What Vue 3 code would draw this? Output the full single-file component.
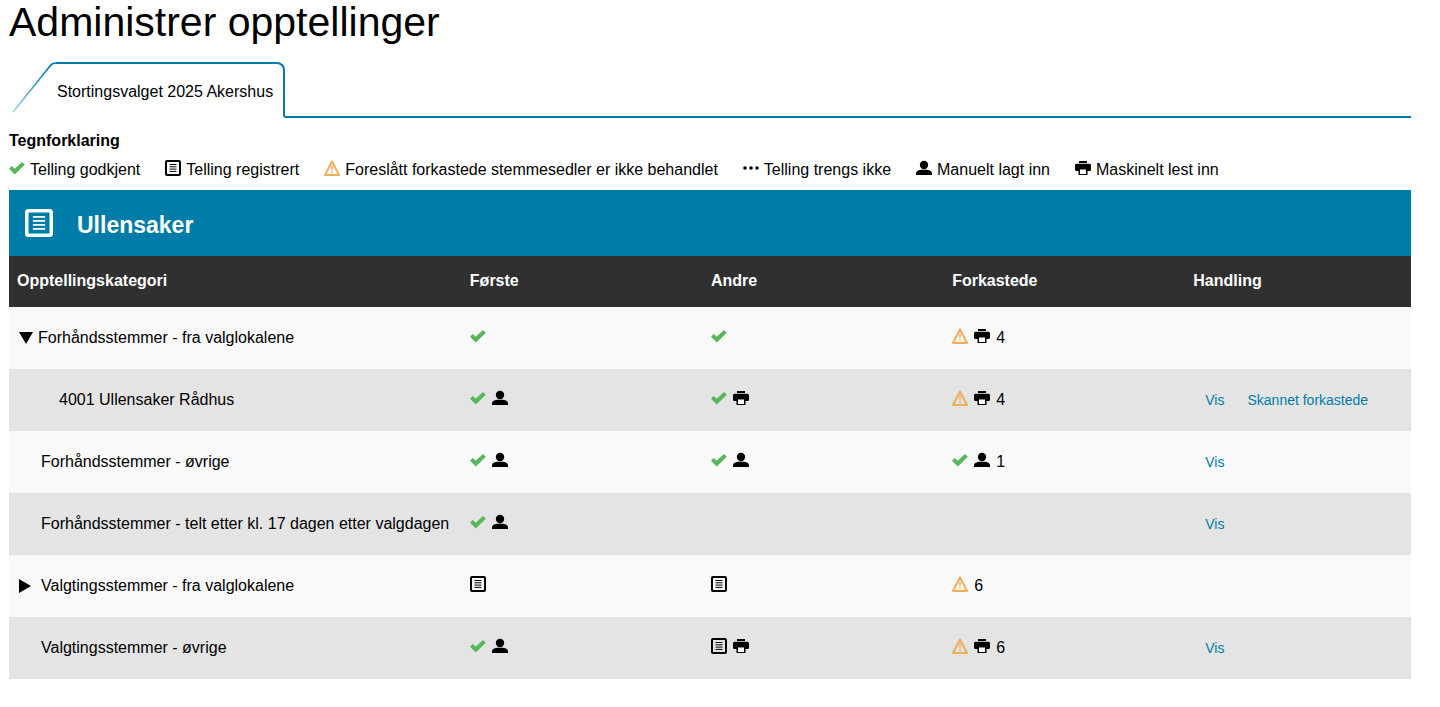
<script setup>
import { h, ref, computed } from 'vue'

const shapes = {
  check: () => [h('path', { d: 'M0 8.700 2.800 5.900 5.700 8.800 13 2 15.800 4.800 5.800 14.400Z', fill: '#57b65a' })],
  list: () => [
    h('rect', { x: 1, y: 1, width: 14, height: 14, rx: 1, fill: 'none', stroke: 'currentColor', 'stroke-width': 2 }),
    h('path', { d: 'M4.500 4.500h7M4.500 6.800h7M4.500 9.100h7M4.500 11.400h7', stroke: 'currentColor', fill: 'none' })
  ],
  warn: () => [
    h('path', { d: 'M8 1.500 15 15H1Z', fill: 'none', stroke: '#f0ad5a', 'stroke-width': 2, 'stroke-linejoin': 'round' }),
    h('path', { d: 'M8 5.800v4.400M8 11.300v1.500', stroke: '#f0ad5a', 'stroke-width': 1.5, fill: 'none' })
  ],
  dots: () => [2, 8, 14].map((cx) => h('circle', { cx, cy: 8, r: 1.8, fill: 'currentColor' })),
  person: () => [
    h('circle', { cx: 8, cy: 5, r: 4.2, fill: 'currentColor' }),
    h('path', { d: 'M0 15v-1.500Q0 10.200 5 9.800H11Q16 10.200 16 13.500V15Z', fill: 'currentColor' })
  ],
  printer: () => [
    h('path', { d: 'M4 1h8v2H4ZM1.500 3.800h13Q16 3.800 16 5.300v4.200Q16 11 14.500 11H12.500v4H3.500v-4H1.500Q0 11 0 9.500V5.300Q0 3.800 1.500 3.800Z', fill: 'currentColor' }),
    h('path', { d: 'M5 9.500h6v4.500H5Z', fill: '#fff' })
  ]
}
const Icon = (props) =>
  h('svg', { viewBox: '0 0 16 16', width: props.size || 16, height: props.size || 16, 'aria-hidden': 'true' }, shapes[props.name]())
Icon.props = ['name', 'size']

const legend = [
  { icon: 'check', text: 'Telling godkjent' },
  { icon: 'list', text: 'Telling registrert' },
  { icon: 'warn', text: 'Foreslått forkastede stemmesedler er ikke behandlet' },
  { icon: 'dots', text: 'Telling trengs ikke' },
  { icon: 'person', text: 'Manuelt lagt inn' },
  { icon: 'printer', text: 'Maskinelt lest inn' }
]

const cell = (icons = [], count = '') => ({ icons, count })
const open = ref(true)
const allRows = [
  { name: 'Forhåndsstemmer - fra valglokalene', toggle: true, cells: [cell(['check']), cell(['check']), cell(['warn', 'printer'], '4')], links: [] },
  { name: '4001 Ullensaker Rådhus', child: true, cells: [cell(['check', 'person']), cell(['check', 'printer']), cell(['warn', 'printer'], '4')], links: ['Vis', 'Skannet forkastede'] },
  { name: 'Forhåndsstemmer - øvrige', cells: [cell(['check', 'person']), cell(['check', 'person']), cell(['check', 'person'], '1')], links: ['Vis'] },
  { name: 'Forhåndsstemmer - telt etter kl. 17 dagen etter valgdagen', cells: [cell(['check', 'person']), cell(), cell()], links: ['Vis'] },
  { name: 'Valgtingsstemmer - fra valglokalene', closed: true, cells: [cell(['list']), cell(['list']), cell(['warn'], '6')], links: [] },
  { name: 'Valgtingsstemmer - øvrige', cells: [cell(['check', 'person']), cell(['list', 'printer']), cell(['warn', 'printer'], '6')], links: ['Vis'] }
]
const rows = computed(() => allRows.filter((r) => !r.child || open.value))
</script>

<template>
  <main class="page">
    <h1>Administrer opptellinger</h1>

    <div class="tabs" role="tablist">
      <svg class="slant" width="44" height="56" viewBox="0 0 44 56" aria-hidden="true">
        <defs>
          <linearGradient id="edge" x1="0" y1="1" x2="1" y2="0">
            <stop offset="0" stop-color="#a8d5e4" />
            <stop offset="0.9" stop-color="#007ca8" />
          </linearGradient>
        </defs>
        <path d="M1 50 38 4Q40 1 44 1" fill="none" stroke="url(#edge)" stroke-width="1.700" />
      </svg>
      <button class="tab" role="tab" aria-selected="true">Stortingsvalget 2025 Akershus</button>
      <div class="rule"></div>
    </div>

    <h2 class="legend-title">Tegnforklaring</h2>
    <ul class="legend">
      <li v-for="item in legend" :key="item.text"><Icon :name="item.icon" /><span>{{ item.text }}</span></li>
    </ul>

    <section>
      <header class="area">
        <Icon name="list" size="28" />
        <h2>Ullensaker</h2>
      </header>
      <table>
        <colgroup><col class="c-name" /><col class="c-mid" /><col class="c-mid" /><col class="c-mid" /><col /></colgroup>
        <thead>
          <tr>
            <th scope="col">Opptellingskategori</th>
            <th scope="col">Første</th>
            <th scope="col">Andre</th>
            <th scope="col">Forkastede</th>
            <th scope="col">Handling</th>
          </tr>
        </thead>
        <tbody>
          <tr v-for="row in rows" :key="row.name">
            <td>
              <div class="name" :class="{ child: row.child }">
                <button v-if="row.toggle" class="toggle wide" :aria-expanded="open" :aria-label="row.name" @click="open = !open">
                  <svg width="14" height="12" viewBox="0 0 14 12" aria-hidden="true"><path :d="open ? 'M0 0h14L7 12Z' : 'M1 0v12L13 6Z'" /></svg>
                </button>
                <button v-else-if="row.closed" class="toggle" aria-expanded="false" :aria-label="row.name">
                  <svg width="12" height="14" viewBox="0 0 12 14" aria-hidden="true"><path d="M0 0v14L12 7Z" /></svg>
                </button>
                <span v-else class="toggle"></span>
                <span>{{ row.name }}</span>
              </div>
            </td>
            <td v-for="(c, i) in row.cells" :key="i">
              <div class="marks"><Icon v-for="n in c.icons" :key="n" :name="n" /><span v-if="c.count">{{ c.count }}</span></div>
            </td>
            <td>
              <div class="links"><a v-for="l in row.links" :key="l" href="#">{{ l }}</a></div>
            </td>
          </tr>
        </tbody>
      </table>
    </section>
  </main>
</template>

<style>
body { background: #fff; }
</style>

<style scoped>
.page {
  padding: 0 29px 0 9px;
  font-family: "Liberation Sans", Arial, sans-serif;
  font-size: 16px;
  line-height: 20px;
  color: #000;
}
svg { display: block; flex: none; }
button { font: inherit; color: inherit; background: none; border: 0; padding: 0; cursor: pointer; }
h1 { margin: 0; font-size: 41px; font-weight: 400; line-height: 44px; }
.tabs { display: flex; margin-top: 18px; padding-left: 3px; height: 56px; }
.tab {
  border-top: 2px solid #007ca8;
  border-right: 2px solid #007ca8;
  border-top-right-radius: 8px;
  height: 54px;
  padding: 4px 10px 0 1px;
  white-space: nowrap;
}
.rule {
  flex: 1;
  align-self: flex-end;
  height: 8px;
  margin-left: -2px;
  border-left: 2px solid #007ca8;
  border-bottom: 2px solid #007ca8;
  border-bottom-left-radius: 3px;
}
.legend-title { margin: 13px 0 0; font-size: 16px; line-height: 20px; }
.legend { display: flex; gap: 25px; margin: 9px 0 10px; padding: 0; list-style: none; white-space: nowrap; }
.legend li { display: flex; gap: 5px; }
.area { display: flex; align-items: center; gap: 24px; height: 66px; padding: 0 16px; background: #007ca8; color: #fff; }
.area h2 { margin: 0; font-size: 23px; line-height: 28px; padding-top: 4px; }
table { width: 100%; table-layout: fixed; border-collapse: collapse; }
.c-name { width: 32.3%; }
.c-mid { width: 17.2%; }
th { height: 51px; padding: 0 8px 2px; text-align: left; background: #303030; color: #fff; box-sizing: border-box; }
td { height: 62px; padding: 0 8px; }
tbody tr:nth-child(odd) { background: #f9f9f9; }
tbody tr:nth-child(even) { background: #e4e4e4; }
.name { display: flex; align-items: center; padding-left: 2px; white-space: nowrap; }
.toggle { width: 22px; flex: none; }
.toggle.wide { width: 19px; }
.child { padding-left: 20px; }
.marks { display: flex; gap: 6px; height: 20px; }
.links { display: flex; gap: 23px; padding-left: 12px; font-size: 14px; white-space: nowrap; }
a { color: #007ca8; text-decoration: none; }
</style>
